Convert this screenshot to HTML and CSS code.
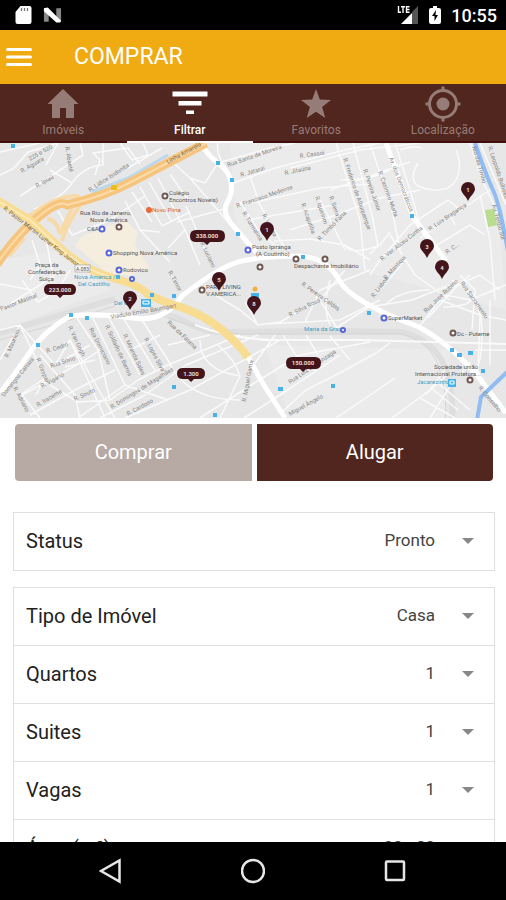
FILE: index.html
```html
<!DOCTYPE html>
<html lang="pt-BR">
<head>
<meta charset="utf-8">
<meta name="viewport" content="width=device-width, initial-scale=1">
<title>Comprar</title>
<link rel="stylesheet" href="styles.css">
</head>
<body>
<div class="status-bar">
  <div class="status-group">
    <svg class="status-icon" viewBox="0 0 18 20" aria-hidden="true"><path fill="#fff" d="M6 1h9q2 0 2 2v14q0 2-2 2H3q-2 0-2-2V7z"/><path stroke="#777" stroke-width="1.3" d="M7 3v3M10 3v3M13 3v3"/></svg>
    <svg class="status-icon" viewBox="0 0 20 18" aria-hidden="true"><path fill="#888" d="M1 2h5v14H1zM14 2h5v14h-5z"/><path fill="#fff" d="M1 2l4-1 14 14-1 2h-4L1 5z"/></svg>
  </div>
  <div class="status-group">
    <svg class="signal" viewBox="0 0 22 20" aria-hidden="true"><path fill="#555" d="M15 7l6-6v18h-6z"/><path fill="#fff" d="M4 19L15 8v11z"/><path fill="none" stroke="#fff" stroke-width="1.4" d="M1.500 1v6.300H4M4 1.700h4M6 1v7M12.500 1.700H9.500v5.600h3M9.500 4.500h3"/></svg>
    <svg class="battery" viewBox="0 0 12 20" aria-hidden="true"><path fill="#fff" d="M4 1h4v2h2q2 0 2 2v12q0 2-2 2H2q-2 0-2-2V5q0-2 2-2h2z"/><path fill="#000" d="M7 5l-4 6h2.500v5L9 10H6.500z"/></svg>
    <span class="clock">10:55</span>
  </div>
</div>

<header class="app-bar">
  <button class="menu" type="button" aria-label="Menu"><svg viewBox="0 0 26 20" aria-hidden="true"><path stroke="#fff" stroke-width="3" stroke-linecap="round" d="M1.500 2.500h23M1.500 10h23M1.500 17.500h23"/></svg></button>
  <h1>COMPRAR</h1>
</header>

<nav class="tabs">
  <a class="tab" href="#imoveis"><svg viewBox="0 0 36 36" aria-hidden="true"><path fill="currentColor" d="M18 3L2.500 18H7v14h8V22h6v10h8V18h4.500z"/></svg><span>Imóveis</span></a>
  <a class="tab active" href="#filtrar" aria-current="page"><svg viewBox="0 0 36 36" aria-hidden="true"><path fill="currentColor" d="M.5 5.500h35v5H.5zM6.500 15h23v4.500h-23zM14 24.500h8V28h-8z"/></svg><span>Filtrar</span></a>
  <a class="tab" href="#favoritos"><svg viewBox="0 0 36 36" aria-hidden="true"><path fill="currentColor" d="M18 3l3.800 10.600L33 14l-8.900 7 3.200 11L18 25.700 8.700 32l3.200-11L3 14l11.200-.4z"/></svg><span>Favoritos</span></a>
  <a class="tab" href="#localizacao"><svg viewBox="0 0 36 36" aria-hidden="true"><circle cx="18" cy="18" r="6.500" fill="currentColor"/><circle cx="18" cy="18" r="13.500" fill="none" stroke="currentColor" stroke-width="3"/><path stroke="currentColor" stroke-width="3" d="M18 .5v5M18 30.500v5M.5 18h5M30.500 18h5"/></svg><span>Localização</span></a>
</nav>

<svg class="map" viewBox="0 143 506 275" role="img" aria-label="Mapa de imóveis">
  <defs>
    <g id="pin"><path fill="#43151a" d="M0 12C-2 7-7 4-7 0a7 7 0 0 1 14 0C7 4 2 7 0 12z"/></g>
  </defs>
  <rect y="143" width="506" height="275" fill="#e7e7e7"/>
  <path fill="#ebebeb" d="M0 260L60 250 110 290 0 330zM230 143H475L500 230 506 310 340 265 300 250 250 250 235 220zM265 345L450 350 445 418H290z"/>
  <path fill="#f5eedf" d="M82 236L125 220 138 232 135 245 150 268 128 276 106 272 75 246z"/>
  <path fill="#b9dc8e" d="M485 210l9-1 3 16-9 2z"/>

  <g class="railway">
    <path d="M0 333L67 313 115 299"/>
    <path d="M150 312Q175 315 190 324T228 332L338 331 403 332Q436 342 445 368T452 418"/>
  </g>
  <path class="track" d="M0 340L70 320 115 306M168 318Q205 332 240 334H400Q430 340 439 368T445 418"/>

  <g class="streets">
    <path d="M0 152L40 143M0 175L14 168 28 152 58 143M20 196L48 178 83 155 80 143M58 143L46 165M34 209Q60 200 72 183T103 165V143M72 183L50 170M95 175L100 160 93 153 128 148 140 164M120 143L132 160 148 155 143 143M128 168L162 148M158 178L185 230 200 265M149 182L172 222M140 187L162 226M132 192L152 222M170 174L188 200M125 201L140 230 170 262M162 226L190 212M185 230L168 248M140 230L160 232M58 211L72 235 110 220 145 196"/>
    <path d="M0 284L32 290 55 275M22 280L38 302 58 290 70 270M32 240L40 265 30 280M45 235L52 270M0 310L32 290"/>
    <path d="M218 143Q215 154 228 171M218 163L270 148 295 143M231 184L275 168 345 150 380 143M236 206L320 188 370 184M240 202L258 230 280 250M250 176L260 205 286 250M247 220L335 205M186 206L205 250M177 222L228 208M168 158L190 178 235 230M205 183L218 163M290 168L360 150 420 143M336 143L360 220 365 270M353 143L372 215 378 246 370 254M370 143L392 210 400 250M395 143L410 190 420 225M318 196L345 250M290 230L336 215 380 198 420 190M274 241L310 239 345 245 370 260M340 180Q380 180 398 164M330 190L410 162M345 246Q353 256 380 245L390 232M410 225L380 260 370 275M400 150Q412 145 422 148M418 163Q405 185 427 189T456 180 456 150M410 225L448 200 458 208M420 238L490 190M450 214L455 225M390 235L415 275 450 300M437 245L470 225 485 235M480 195L490 240 495 300M450 288L480 275 500 290M460 275L475 290 472 330M445 295L470 300 506 285M470 143L482 180 506 230M480 143L506 205"/>
    <path d="M205 183L190 178M215 295L240 310 258 325 280 322 320 300 345 270M245 302L258 325M265 324L305 322 320 290 370 270M320 300L338 330M305 322L340 320 380 300M330 280Q322 308 330 325M369 307L336 328M369 307L412 300 450 285M385 305Q400 290 430 290M428 318L458 285 470 275M380 290L405 260M419 327L440 300 480 315 506 320M452 280Q482 295 482 330T475 370M480 315L478 370M490 300V365M443 307Q465 307 472 300M475 350L506 350M475 366L483 383M470 362L460 375"/>
    <path d="M0 330L20 325 45 378 36 395M20 325L0 360M20 325L55 365 70 340 115 418M55 365L90 345M70 340L105 418M40 355L75 395 80 418M22 395L50 380 85 360 100 350M22 395L40 418M30 415L75 390 115 370M45 378L20 395M75 315L98 350 110 400M92 316L125 385M108 316L140 375M122 316L155 370M140 317L168 360M130 350L160 335M65 367L95 360M50 385L78 402 110 400 138 380 168 365 240 335M78 418L125 385 168 400M100 418L145 395 186 365 258 335M125 418L190 390 280 340M168 345L210 335M168 360Q185 400 240 400M200 340Q200 370 240 376M218 345Q235 360 240 376M240 376L220 418M200 418L256 382 300 355 370 342M244 418L280 395 310 375 340 355M283 335L302 365M306 335L318 355M330 336L350 360M255 363L275 335M281 413L306 390 336 375 376 353 390 343M336 418L360 402 395 378M392 418L430 390 445 370M425 395L447 375M430 418L450 386M420 398L455 418M430 387L458 410M437 382L470 410"/>
  </g>
  <g class="arterials">
    <path d="M201 143Q207 155 218 163T231 182 227 203 235 228L256 252"/>
    <path d="M0 393Q16 373 30 352T70 316Q102 313 133 318T182 296Q215 270 235 263T301 256Q327 258 339 280T419 327Q455 347 483 383L506 413"/>
    <path d="M247 355L262 382 285 418M386 143L413 217 446 261"/>
    <path d="M475 371L483 383"/>
  </g>
  <path class="street-thin" d="M260 340H360L506 344M195 325Q230 338 270 340"/>
  <path class="river" d="M475 143Q486 175 493 190T508 252M508 371L481 397 477 420"/>
  <path class="canal" d="M92 192L128 178 168 155"/>
  <path class="orange-light" d="M25 220Q54 195 78 196L60 233Q55 218 47 219M9 256L24 238M62 241Q65 228 80 205"/>
  <path class="highway" d="M-3 264Q15 237 37 218T67 205Q105 196 133 181L206 143"/>
  <path class="highway-line" d="M-3 264Q15 237 37 218T67 205Q105 196 133 181L206 143"/>
  <path class="yellow-road" d="M-3 200L30 220 60 248Q84 270 113 278T147 294L170 304Q216 315 248 357"/>
  <path class="yellow-line" d="M0 202L30 220 60 248Q84 270 113 278"/>

  <g class="street-names">
    <text x="30" y="161" transform="rotate(-30 30 161)">225 e 520</text>
    <text x="22" y="173" transform="rotate(-30 22 173)">R. Aguara</text>
    <text x="37" y="188" transform="rotate(-30 37 188)">R. Ipiaú</text>
    <text x="65" y="147" transform="rotate(80 65 147)">R. Abaeté</text>
    <text x="90" y="192" transform="rotate(-33 90 192)">R. Lidice Isidonita</text>
    <text x="168" y="164" transform="rotate(-29 168 164)" class="road">Linha Amarela</text>
    <text x="3" y="209" transform="rotate(38 3 209)" class="road">R. Pastor Martin Luther King Júnior</text>
    <text x="228" y="167" transform="rotate(-19 228 167)">Rua Santa de Moreira</text>
    <text x="241" y="177" transform="rotate(-17 241 177)">R. Jataraí</text>
    <text x="285" y="175" transform="rotate(-12 285 175)">R. Jitaúna</text>
    <text x="300" y="158" transform="rotate(-8 300 158)">R. Cassoi</text>
    <text x="237" y="208" transform="rotate(-19 237 208)">R. Francisco Medeiros</text>
    <text x="242" y="213" transform="rotate(58 242 213)">R. Turmalina</text>
    <text x="262" y="215" transform="rotate(62 262 215)">R. Várzea</text>
    <text x="301" y="204" transform="rotate(70 301 204)">R. Acajutiba</text>
    <text x="315" y="197" transform="rotate(72 315 197)">R. Iquiririm</text>
    <text x="329" y="197" transform="rotate(70 329 197)">R. Serra</text>
    <text x="320" y="241" transform="rotate(-46 320 241)">R. Timbó Faria</text>
    <text x="343" y="159" transform="rotate(71 343 159)">R. Frederico de Albuquerque</text>
    <text x="363" y="170" transform="rotate(71 363 170)">R. Pereira Júnior</text>
    <text x="378" y="172" transform="rotate(70 378 172)">R. Casimiro Murta</text>
    <text x="389" y="158" transform="rotate(69 389 158)">Av. dos Democráticos</text>
    <text x="430" y="231" transform="rotate(-34 430 231)">R. Luis Bragança</text>
    <text x="382" y="261" transform="rotate(-38 382 261)">R. Ver. Alceu Cunha</text>
    <text x="386" y="280" transform="rotate(-48 386 280)">R. Mantiqui</text>
    <text x="447" y="254" transform="rotate(-33 447 254)">R. C...</text>
    <text x="472" y="147" transform="rotate(74 472 147)">Rio das Timbó</text>
    <text x="488" y="147" transform="rotate(72 488 147)">R. Leopoldo Bulhões</text>
    <text x="492" y="205" transform="rotate(75 492 205)">Av. Timbó Sul</text>
    <text x="200" y="243" transform="rotate(64 200 243)">R. Luciano</text>
    <text x="168" y="272" transform="rotate(62 168 272)">R. Timor</text>
    <text x="1" y="311" transform="rotate(-21 1 311)">Pastor Matinal</text>
    <text x="8" y="358" transform="rotate(-67 8 358)">R. Maurício</text>
    <text x="4" y="397" transform="rotate(-51 4 397)">Domingos Carrara</text>
    <text x="47" y="353" transform="rotate(-18 47 353)">R. Cedro</text>
    <text x="51" y="368" transform="rotate(-18 51 368)">Rua Silvio</text>
    <text x="36" y="359" transform="rotate(68 36 359)">R. Gaspar</text>
    <text x="42" y="388" transform="rotate(-29 42 388)">R. Vigário</text>
    <text x="38" y="407" transform="rotate(-31 38 407)">R. Iracema</text>
    <text x="75" y="401" transform="rotate(-25 75 401)">R. Souto</text>
    <text x="13" y="388" transform="rotate(62 13 388)">R. Adriano</text>
    <text x="68" y="327" transform="rotate(65 68 327)">R. Van Gogh</text>
    <text x="89" y="329" transform="rotate(63 89 329)">Rua Domiciano</text>
    <text x="105" y="326" transform="rotate(65 105 326)">R. Soldado de Barros</text>
    <text x="123" y="335" transform="rotate(65 123 335)">R. Miranda Sales</text>
    <text x="144" y="339" transform="rotate(62 144 339)">R. Lopes Silva</text>
    <text x="111" y="319" transform="rotate(-10 111 319)">Viaduto Emílio Baumgart</text>
    <text x="112" y="409" transform="rotate(-32 112 409)">R. Domingos de Magalhães</text>
    <text x="128" y="416" transform="rotate(-29 128 416)">R. Cardoso</text>
    <text x="167" y="323" transform="rotate(44 167 323)">Rua da Fátima</text>
    <text x="246" y="402" transform="rotate(-80 246 402)">R. Miguel Gama</text>
    <text x="290" y="384" transform="rotate(-34 290 384)">Rua Luiz de Gonzaga</text>
    <text x="290" y="416" transform="rotate(-29 290 416)">Miguel Ângelo</text>
    <text x="290" y="317" transform="rotate(-27 290 317)">R. Silva Rosa</text>
    <text x="301" y="285" transform="rotate(35 301 285)">R. Pereira Caldas</text>
    <text x="374" y="298" transform="rotate(-53 374 298)">R. Lisboa</text>
    <text x="426" y="313" transform="rotate(-44 426 313)">Rua José Rubino</text>
    <text x="460" y="283" transform="rotate(55 460 283)">Rua Sacramento</text>
    <text x="478" y="388" transform="rotate(50 478 388)">R. Conselho</text>
  </g>
  <g class="places">
    <text x="169" y="195">Colégio</text><text x="169" y="202">Encontros Noveis)</text>
    <text x="80" y="215">Rua Rio de Janeiro,</text><text x="90" y="222">Nova América</text>
    <text x="87" y="231">C&amp;A</text><text x="113" y="255">Shopping Nova América</text>
    <text x="123" y="272">Rodovico</text>
    <text x="35" y="267">Praça da</text><text x="28" y="274">Confederação</text><text x="39" y="281">Suíça</text>
    <text x="252" y="249">Posto Ipiranga</text><text x="256" y="256">(A Coutinho)</text>
    <text x="294" y="268">Despachante Imobiliário</text>
    <text x="206" y="289">PARK LIVING</text><text x="206" y="296">V.AMERICA...</text>
    <text x="388" y="320">SuperMarket</text><text x="457" y="336">Dc - Puteme</text>
    <text x="434" y="369">Sociedade união</text><text x="415" y="376">Internacional Protetora...</text>
    <text x="152" y="212" fill="#d85b35">Novo Piina</text>
    <g fill="#3c9fc5"><text x="74" y="279">Nova América /</text><text x="78" y="286">Del Castilho</text><text x="114" y="305">Del C</text><text x="304" y="331">Maria da Graça</text><text x="417" y="384">Jacarezinho</text></g>
  </g>
  <rect x="75" y="265" width="15" height="7" fill="#f8f8f8" stroke="#999" stroke-width=".6"/><text class="route" x="76" y="271">A-083</text>
  <g fill="#46b3e8"><path d="M141 299h10v8h-10zM448 379h8v8h-8z"/><path d="M11 144h4v4h-4zM216 161h4v4h-4zM230 178h4v4h-4zM236 232h4v4h-4zM301 255h4v4h-4zM410 214h4v4h-4zM69 313h4v4h-4zM85 316h4v4h-4zM36 343h4v4h-4zM116 275h4v4h-4zM150 293h4v4h-4zM172 294h4v4h-4zM172 385h4v4h-4zM213 413h4v4h-4zM278 387h5v4h-5zM331 384h4v4h-4zM367 311h4v4h-4zM450 348h4v4h-4zM457 353h5v4h-5zM468 351h5v4h-5zM481 369h4v4h-4z"/><path d="M251 293h8v6h-8z"/></g>
  <path fill="none" stroke="#fff" d="M143 304v-3h6v3zM450 381h4v3h-4z"/>
  <g class="poi" stroke="#5865d7"><circle cx="102" cy="229" r="2.500"/><circle cx="109" cy="253" r="2.500"/><circle cx="119" cy="270" r="2.500"/><circle cx="132" cy="279" r="2"/><circle cx="248" cy="250" r="2.500"/><circle cx="384" cy="318" r="2.500"/><circle cx="343" cy="330" r="2"/></g>
  <g class="poi" stroke="#705954"><circle cx="119" cy="227" r="2.500"/><circle cx="165" cy="196" r="2.500"/><circle cx="260" cy="267" r="2.500"/><circle cx="296" cy="259" r="2.500"/><circle cx="325" cy="259" r="2.500"/><circle cx="202" cy="290" r="2.500"/><circle cx="453" cy="333" r="2.500"/><circle cx="470" cy="380" r="2.500"/></g>
  <circle cx="149" cy="210" r="3" fill="#e86b3d"/><rect x="111" y="185" width="6" height="5" rx="1" fill="#e7bd20"/><circle cx="255" cy="289" r="2.500" fill="#efb33d"/>
  <g class="pins">
    <g><use href="#pin" x="267" y="229"/><text x="267" y="232">1</text></g>
    <g><use href="#pin" x="468" y="189"/><text x="468" y="192">1</text></g>
    <g><use href="#pin" x="427" y="246"/><text x="427" y="249">3</text></g>
    <g><use href="#pin" x="442" y="267"/><text x="442" y="270">4</text></g>
    <g><use href="#pin" x="130" y="298"/><text x="130" y="301">2</text></g>
    <g><use href="#pin" x="219" y="279"/><text x="219" y="282">5</text></g>
    <g><use href="#pin" x="254" y="303"/><text x="254" y="306">8</text></g>
    <path d="M196 230h23q6 0 6 6t-6 6h-9l-3 3-3-3h-8q-6 0-6-6t6-6zM50 284h20q6 0 6 5.500t-6 5.500h-7l-3 3-3-3h-7q-6 0-6-5.500t6-5.500zM183 368h16q6 0 6 5.500t-6 5.500h-5l-3 3-3-3h-5q-6 0-6-5.500t6-5.500zM292 357h23q6 0 6 6t-6 6h-9l-3 3-3-3h-8q-6 0-6-6t6-6z"/>
    <text x="207" y="238">338.000</text><text x="60" y="292">223.000</text><text x="191" y="376">1.300</text><text x="303" y="365">150.000</text>
  </g>
</svg>

<main class="filters">
  <div class="deal">
    <button class="deal-option muted" type="button">Comprar</button>
    <button class="deal-option" type="button">Alugar</button>
  </div>
  <form>
    <div class="card">
      <div class="field"><label for="status">Status</label><div class="picker"><select id="status"><option>Pronto</option></select></div></div>
    </div>
    <div class="card">
      <div class="field"><label for="tipo">Tipo de Imóvel</label><div class="picker"><select id="tipo"><option>Casa</option></select></div></div>
      <div class="field"><label for="quartos">Quartos</label><div class="picker"><select id="quartos"><option>1</option></select></div></div>
      <div class="field"><label for="suites">Suites</label><div class="picker"><select id="suites"><option>1</option></select></div></div>
      <div class="field"><label for="vagas">Vagas</label><div class="picker"><select id="vagas"><option>1</option></select></div></div>
      <div class="field"><label for="area">Área (m²)</label><div class="picker"><select id="area"><option>20 - 80</option></select></div></div>
    </div>
  </form>
</main>

<footer class="system-nav">
  <button type="button" aria-label="Voltar"><svg viewBox="0 0 24 26" aria-hidden="true"><path d="M20.500 2.500v21L2 13z"/></svg></button>
  <button type="button" aria-label="Início"><svg viewBox="0 0 24 26" aria-hidden="true"><circle cx="12" cy="13" r="11"/></svg></button>
  <button type="button" aria-label="Recentes"><svg viewBox="0 0 24 26" aria-hidden="true"><rect x="3" y="3.500" width="18" height="18.500" rx="1"/></svg></button>
</footer>
</body>
</html>
```
FILE: styles.css
```css
* { box-sizing: border-box; }

body {
  display: flex;
  flex-direction: column;
  height: 100vh;
  margin: 0;
  overflow: hidden;
  background: #fff;
  color: #222;
  font-family: Roboto, sans-serif;
}

button, select { font: inherit; }
button { border: 0; cursor: pointer; }
svg { display: block; }

.status-bar {
  display: flex;
  flex: none;
  align-items: center;
  justify-content: space-between;
  height: 30px;
  padding: 0 9px 0 14px;
  background: #000;
  color: #fff;
}
.status-group { display: flex; align-items: center; gap: 10px; }
.status-icon { width: 19px; height: 20px; }
.signal { width: 22px; height: 20px; }
.battery { width: 12px; height: 20px; }
.clock { padding-top: 2px; font-size: 18px; font-weight: 500; line-height: 28px; }

.app-bar {
  display: flex;
  flex: none;
  align-items: center;
  gap: 42px;
  height: 54px;
  padding: 0 6px;
  background: #f0aa12;
  color: #fff;
}
.app-bar h1 { margin: 0; font-size: 23px; font-weight: 400; line-height: 30px; }
.menu { padding: 0; background: none; }
.menu svg { width: 26px; height: 20px; }

.tabs {
  display: grid;
  flex: none;
  grid-template-columns: repeat(4, 1fr);
  height: 59px;
  background: #51261e;
}
.tab {
  display: flex;
  flex-direction: column;
  align-items: center;
  padding-top: 2px;
  border-bottom: 2px solid #430d0d;
  color: #967c76;
  font-size: 12px;
  line-height: 16px;
  text-decoration: none;
}
.tab svg { width: 36px; height: 36px; }
.tab.active { border-color: #fff; color: #fff; font-weight: 500; }

.map { flex: none; width: 100%; height: auto; }
.streets, .arterials, .railway, .track, .street-thin, .river, .canal, .orange-light,
.highway, .highway-line, .yellow-road, .yellow-line { fill: none; stroke-linejoin: round; }
.streets { stroke: #fafafa; stroke-width: 1.5; }
.street-thin { stroke: #fafafa; stroke-width: 2; }
.arterials { stroke: #fff; stroke-width: 5; }
.railway { stroke: #dedede; stroke-width: 6; }
.track { stroke: #d5d5d5; stroke-width: 1; }
.river { stroke: #8fbdf2; stroke-width: 4; }
.canal { stroke: #bdd7ec; stroke-width: 3; }
.orange-light { stroke: #f8d9a8; stroke-width: 4; }
.highway { stroke: #f6c47c; stroke-width: 9; }
.highway-line { stroke: #fadba9; stroke-width: 2; }
.yellow-road { stroke: #f8dc91; stroke-width: 8; }
.yellow-line { stroke: #fbeab9; stroke-width: 2; }
.street-names { fill: #858585; font-size: 6px; }
.street-names .road { fill: #7c684d; }
.places { fill: #555; font-size: 6px; }
.route { fill: #555; font-size: 5px; }
.poi { fill: #fff; stroke-width: 2; }
.pins { fill: #43151a; }
.pins text { fill: #e8dcdc; font-size: 6px; font-weight: 700; text-anchor: middle; }

.filters { flex: 1; min-height: 0; overflow: hidden; padding: 6px 11px 0 13px; }
.deal { display: flex; gap: 5px; margin: 0 2px 31px; }
.deal-option {
  flex: 1;
  height: 57px;
  padding: 0 0 2px;
  border-radius: 0 4px 4px 0;
  background: #51261e;
  color: #fff;
  font-size: 20px;
}
.deal-option.muted { border-radius: 4px 0 0 4px; background: #b7a9a4; }

.card { margin-bottom: 16px; border: 1px solid #dfdfdf; border-top: 0; }
.field {
  display: flex;
  align-items: center;
  height: 58px;
  padding-bottom: 2px;
  border-top: 1px solid #dfdfdf;
}
.field label { padding-left: 12px; font-size: 20px; line-height: 24px; }
.picker { position: relative; flex: 1; }
.picker::after {
  position: absolute;
  top: calc(50% - 3px);
  right: 20px;
  border: 6px solid transparent;
  border-top-color: #888;
  border-bottom: 0;
  content: "";
  pointer-events: none;
}
.picker select {
  display: block;
  width: 100%;
  height: 28px;
  padding: 0 59px 2px 0;
  border: 0;
  appearance: none;
  background: none;
  color: #444;
  font-size: 17px;
  text-align-last: right;
}

.system-nav {
  display: flex;
  flex: none;
  justify-content: center;
  gap: 118px;
  height: 58px;
  background: #000;
}
.system-nav button { padding: 0; background: none; }
.system-nav svg { width: 24px; height: 26px; fill: none; stroke: #e6e6e6; stroke-width: 2.5; }
```
